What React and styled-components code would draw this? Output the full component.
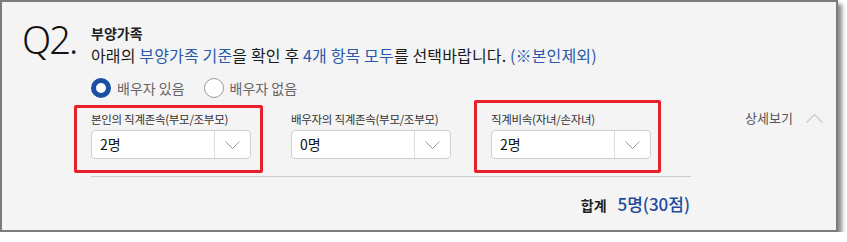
import React from "react";
import styled, { createGlobalStyle } from "styled-components";

const GlobalStyle = createGlobalStyle`
  body {
    margin: 0;
    background: #ffffff;
    font-family: "Noto Sans CJK KR", "Noto Sans", sans-serif;
  }
`;

const Panel = styled.div`
  position: relative;
  box-sizing: border-box;
  width: 838px;
  height: 232px;
  border: 2px solid #7b7b7b;
  background: #f4f4f4;
  box-shadow: 4px 4px 4px rgba(0, 0, 0, 0.45);
  display: flex;
  padding-top: 22px;
`;

const QMark = styled.div`
  width: 69px;
  margin-left: 20px;
  margin-top: -4px;
  font-family: "Noto Sans", sans-serif;
  font-weight: 300;
  font-size: 38px;
  line-height: 38px;
  letter-spacing: -2px;
  color: #111;
`;

const Main = styled.div`
  width: 600px;
  display: flex;
  flex-direction: column;
`;

const Title = styled.div`
  font-size: 14px;
  font-weight: 700;
  line-height: 18px;
  color: #222;
`;

const Subtitle = styled.div`
  margin-top: 2px;
  font-size: 16px;
  line-height: 22px;
  letter-spacing: 0.15px;
  color: #1a1a1a;
  white-space: nowrap;
  span {
    color: #2a58ab;
  }
`;

const RadioRow = styled.div`
  margin-top: 12px;
  display: flex;
  gap: 19px;
`;

const RadioItem = styled.label`
  display: flex;
  align-items: center;
  gap: 6px;
  font-size: 14px;
  line-height: 20px;
  color: #666;
`;

const RadioDot = styled.span`
  box-sizing: border-box;
  width: 20px;
  height: 20px;
  border-radius: 50%;
  background: #fff;
  border: ${(p) => (p.$checked ? "5px solid #1b4fa3" : "1px solid #9a9a9a")};
`;

const Fields = styled.div`
  margin-top: 13px;
  display: flex;
  gap: 40px;
`;

const Field = styled.div`
  width: 160px;
  display: flex;
  flex-direction: column;
`;

const FieldLabel = styled.div`
  font-size: 11.5px;
  line-height: 16px;
  color: #333;
  white-space: nowrap;
  letter-spacing: -0.3px;
`;

const Select = styled.div`
  margin-top: 3px;
  box-sizing: border-box;
  height: 29px;
  display: flex;
  background: #fff;
  border: 1px solid #cfcfcf;
  border-radius: 4px;
`;

const SelectValue = styled.div`
  flex: 1;
  padding-left: 8px;
  font-size: 14px;
  line-height: 27px;
  color: #111;
`;

const SelectArrow = styled.div`
  width: 35px;
  border-left: 1px solid #ddd;
  display: flex;
  align-items: center;
  justify-content: center;
`;

const Divider = styled.div`
  margin-top: 17px;
  height: 1px;
  background: #cccccc;
`;

const Total = styled.div`
  margin-top: 15px;
  display: flex;
  justify-content: flex-end;
  align-items: baseline;
  gap: 11px;
  padding-right: 1px;
  line-height: 24px;
`;

const TotalLabel = styled.span`
  font-size: 14px;
  font-weight: 700;
  color: #222;
`;

const TotalValue = styled.span`
  font-size: 17px;
  font-weight: 500;
  color: #1d4c9e;
`;

const Aside = styled.div`
  margin-left: 54px;
  margin-top: 85px;
  height: 18px;
  display: flex;
  align-items: center;
  gap: 13px;
  font-size: 13px;
  line-height: 18px;
  color: #555;
  white-space: nowrap;
`;

const Highlight = styled.div`
  position: absolute;
  box-sizing: border-box;
  border: 3px solid #e8202a;
  border-radius: 2px;
  pointer-events: none;
`;

const ChevronDown = () => (
  <svg width="15" height="8" viewBox="0 0 15 8" fill="none">
    <path d="M0.5 0.5 L7.5 7.5 L14.5 0.5" stroke="#9a9a9a" strokeWidth="1" />
  </svg>
);

const ChevronUp = () => (
  <svg width="17" height="9" viewBox="0 0 17 9" fill="none">
    <path d="M0.5 8.5 L8.5 0.5 L16.5 8.5" stroke="#c8c8c8" strokeWidth="1.2" />
  </svg>
);

const fields = [
  { label: "본인의 직계존속(부모/조부모)", value: "2명" },
  { label: "배우자의 직계존속(부모/조부모)", value: "0명" },
  { label: "직계비속(자녀/손자녀)", value: "2명" },
];

const App = () => {
  return (
    <>
      <GlobalStyle />
      <Panel>
        <QMark>Q2.</QMark>
        <Main>
          <Title>부양가족</Title>
          <Subtitle>
            아래의 <span>부양가족 기준</span>을 확인 후 <span>4개 항목 모두</span>를 선택바랍니다.{" "}
            <span>(※본인제외)</span>
          </Subtitle>
          <RadioRow>
            <RadioItem>
              <RadioDot $checked /> 배우자 있음
            </RadioItem>
            <RadioItem>
              <RadioDot /> 배우자 없음
            </RadioItem>
          </RadioRow>
          <Fields>
            {fields.map((item, index) => (
              <Field key={index}>
                <FieldLabel>{item.label}</FieldLabel>
                <Select>
                  <SelectValue>{item.value}</SelectValue>
                  <SelectArrow>
                    <ChevronDown />
                  </SelectArrow>
                </Select>
              </Field>
            ))}
          </Fields>
          <Divider />
          <Total>
            <TotalLabel>합계</TotalLabel>
            <TotalValue>5명(30점)</TotalValue>
          </Total>
        </Main>
        <Aside>
          상세보기 <ChevronUp />
        </Aside>
        <Highlight style={{ left: 72, top: 103, width: 189, height: 68 }} />
        <Highlight style={{ left: 472, top: 98, width: 187, height: 73 }} />
      </Panel>
    </>
  );
};

export default App;
